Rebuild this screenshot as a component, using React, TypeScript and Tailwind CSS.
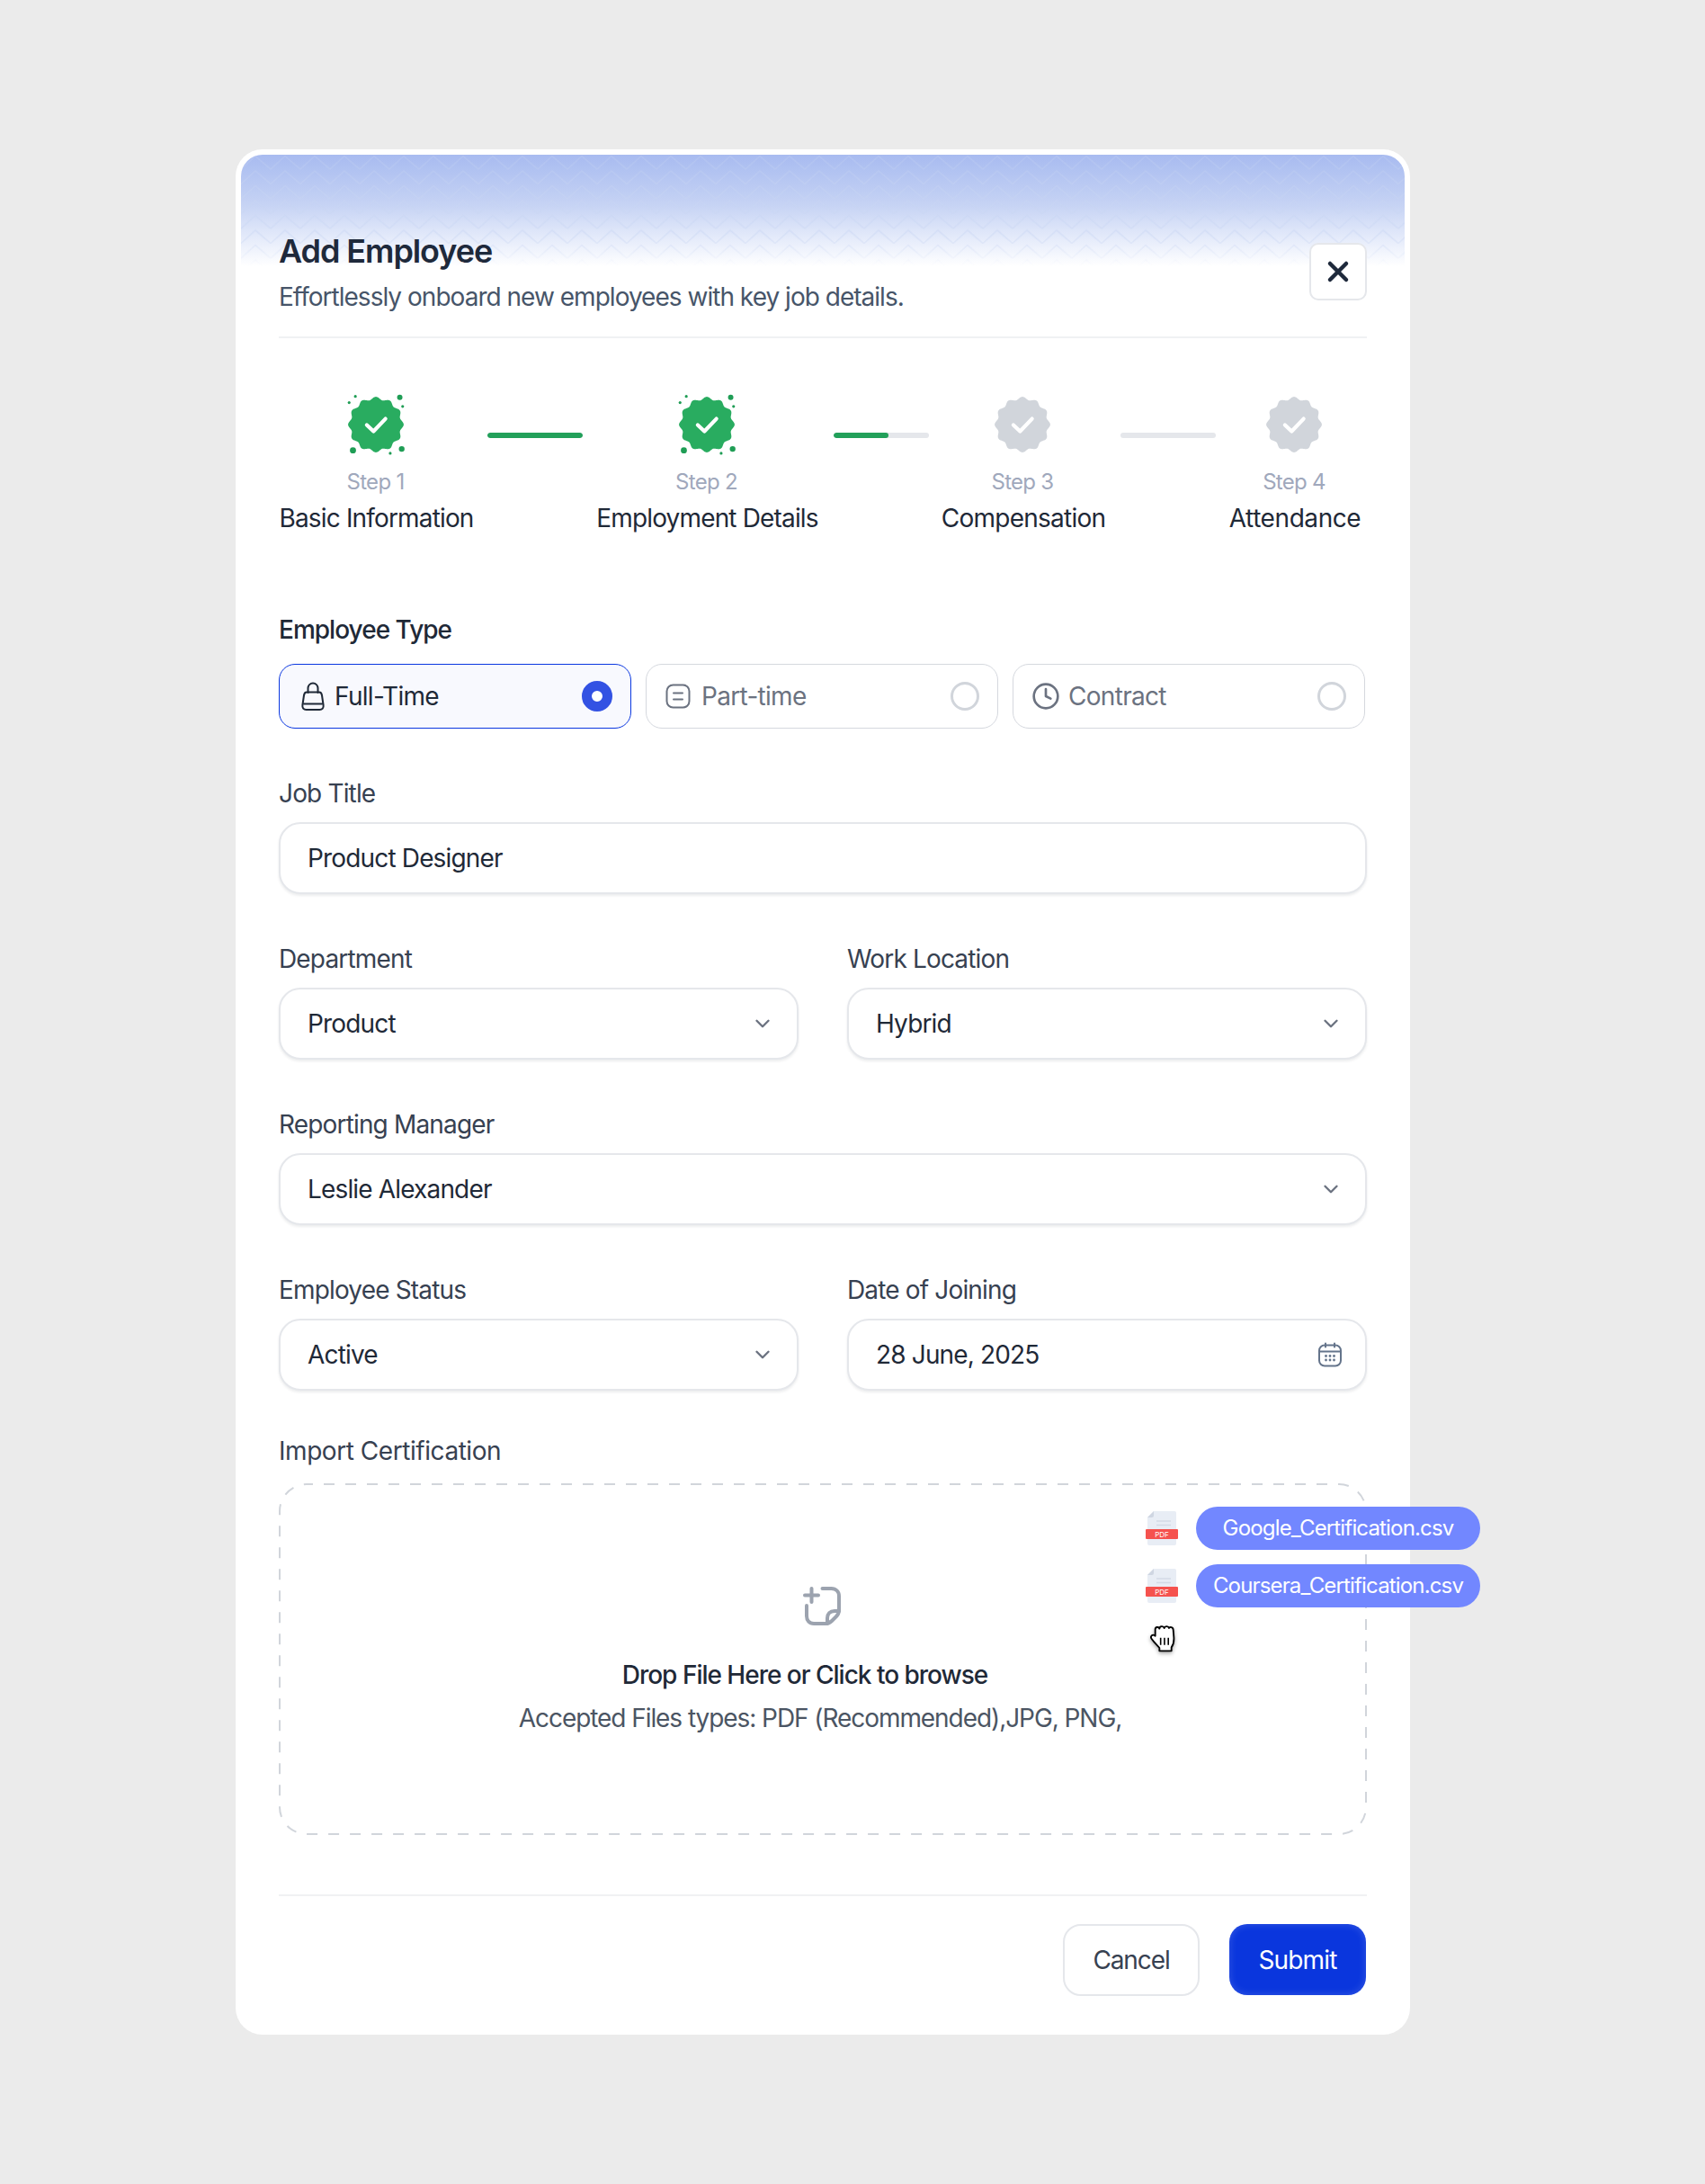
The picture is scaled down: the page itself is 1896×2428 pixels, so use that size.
import { ChevronDown, Clock, X } from "lucide-react";

const steps = [
	{ step: "Step 1", label: "Basic Information", done: true, w: "w-[217px]", track: "tracking-[-0.03em]" },
	{ step: "Step 2", label: "Employment Details", done: true, w: "w-[247px] mr-[2px]", track: "tracking-[-0.03em]" },
	{ step: "Step 3", label: "Compensation", done: false, w: "w-[180px] mr-[3px]", track: "tracking-[-0.027em]" },
	{ step: "Step 4", label: "Attendance", done: false, w: "w-[146px]", track: "tracking-[-0.015em]" },
];

// wavy seal outline, 12 lobes
const sealPath = (() => {
	const pts: string[] = [];
	for (let i = 0; i < 240; i++) {
		const a = (i / 240) * Math.PI * 2 + Math.PI / 2;
		const r = 27.6 + 1.5 * Math.cos(12 * (a - Math.PI / 2));
		pts.push(`${(32 + r * Math.cos(a)).toFixed(2)} ${(32 + r * Math.sin(a)).toFixed(2)}`);
	}
	return `M${pts.join("L")}Z`;
})();

function Badge({ done }: { done: boolean }) {
	return (
		<svg width="68" height="68" viewBox="0 0 64 64" className="block -mt-[4px] -translate-x-[1px]">
			<path d={sealPath} fill={done ? "#29ac60" : "#d1d5db"} />
			<path d="M22.500 32.500l7 6.500 12.500-13" fill="none" stroke="#fff" strokeWidth="4" strokeLinecap="round" strokeLinejoin="round" />
			{done && (
				<g fill="#1f9d55">
					<circle cx="57" cy="3.500" r="2.800" />
					<circle cx="60" cy="13" r="1.500" />
					<circle cx="4" cy="9" r="1.500" />
					<circle cx="10.500" cy="2.500" r="1.500" />
					<circle cx="8" cy="59" r="3.200" />
					<circle cx="59" cy="57.500" r="3" />
					<circle cx="47" cy="62" r="1.500" />
				</g>
			)}
		</svg>
	);
}

function Connector({ fill }: { fill: string }) {
	return (
		<div className="mt-[39px] h-[6px] w-[106px] shrink-0 overflow-hidden rounded-full bg-[#e5e7eb]">
			<div className={`h-full rounded-full bg-[#22a05a] ${fill}`} />
		</div>
	);
}

function Radio({ on }: { on: boolean }) {
	return on ? (
		<span className="h-[34px] w-[34px] rounded-full border-[11px] border-[#3352e3] bg-white" />
	) : (
		<span className="h-[32px] w-[32px] rounded-full border-[3px] border-[#d1d5db] bg-white" />
	);
}

function BagIcon() {
	return (
		<svg width="32" height="34" viewBox="0 0 32 34" fill="none" stroke="#1f2937" strokeWidth="2" strokeLinecap="round" strokeLinejoin="round">
			<path d="M9 12.500C7 12.500 6.300 14 6 16L4.400 27c-.4 3 1.200 5 4.100 5h15c2.900 0 4.500-2 4.100-5L26 16c-.3-2-1-3.500-3-3.500z" />
			<path d="M10.500 13V8a5.500 5.500 0 0 1 11 0v5" />
			<path d="M6 25.500h20" />
		</svg>
	);
}

function NoteIcon() {
	return (
		<svg width="32" height="32" viewBox="0 0 32 32" fill="none" stroke="#6b7280" strokeWidth="2" strokeLinecap="round">
			<rect x="3.500" y="3.500" width="25" height="25" rx="7" />
			<path d="M11 12.500h10M11 19.500h10" />
		</svg>
	);
}

function CalendarIcon() {
	return (
		<svg width="30" height="30" viewBox="0 0 30 30" fill="none" stroke="#64748b" strokeWidth="2" strokeLinecap="round" className="shrink-0">
			<rect x="3" y="4.500" width="24" height="23" rx="6" />
			<path d="M3.500 11.500h23M10 2.500v4M20 2.500v4" />
			<g fill="#64748b" stroke="none">
				<circle cx="10.500" cy="16.500" r="1.400" />
				<circle cx="15" cy="16.500" r="1.400" />
				<circle cx="19.500" cy="16.500" r="1.400" />
				<circle cx="10.500" cy="21" r="1.400" />
				<circle cx="15" cy="21" r="1.400" />
				<circle cx="19.500" cy="21" r="1.400" />
			</g>
		</svg>
	);
}

function UploadIcon() {
	return (
		<svg width="44" height="46" viewBox="0 0 44 46" fill="none" stroke="#9ca3af" strokeWidth="4" strokeLinecap="round" strokeLinejoin="round">
			<path d="M2 10.500h15M9.500 3v15" />
			<path d="M21.500 3h10c5 0 8.500 3.500 8.500 8.500V27c0 3-1 5-3 7l-5 5c-2 2-4 3-7 3H12c-5 0-8-3.500-8-8.500V22" />
			<path d="M40 28h-5c-5 0-8 3-8 8v6" />
		</svg>
	);
}

function PdfIcon() {
	return (
		<div className="relative h-[38px] w-[36px]">
			<svg width="32" height="38" viewBox="0 0 32 38" className="absolute left-[2px] top-0">
				<path d="M7 0h23a2 2 0 0 1 2 2v34a2 2 0 0 1-2 2H2a2 2 0 0 1-2-2V7z" fill="#e8edf5" />
				<path d="M7 0v5a2 2 0 0 1-2 2H0z" fill="#cfd6e2" />
				<path d="M10 11h16M10 15.500h16" stroke="#d3dae6" strokeWidth="1.500" />
			</svg>
			<span className="absolute left-0 top-[20px] flex h-[11px] w-[36px] items-center justify-center rounded-[1px] bg-[#f5524e] text-[8px] leading-none text-white">
				PDF
			</span>
		</div>
	);
}

function HandCursor() {
	return (
		<svg width="40" height="40" viewBox="0 0 30 30" className="drop-shadow-[0_2px_2px_rgba(0,0,0,0.35)]">
			<path
				d="M8 8.500c0-2 3-2.500 3.500-.5 0-2.500 3.500-2.500 4-.5.500-2 3.500-1.800 4 0 .5-1.300 3.500-1 3.500 1.500l.5 6c.3 4-.5 6.500-2 8.500v3H11.500v-2.500c-2-2.500-4-4-6.500-7.500-1.500-2 .5-4.500 3-2.500z"
				fill="#fff"
				stroke="#000"
				strokeWidth="1.400"
				strokeLinejoin="round"
			/>
			<path d="M12.500 15.500v6M15.700 15.500v6M18.900 15.500v6" stroke="#000" strokeWidth="1.200" />
		</svg>
	);
}

function ZigzagHeader() {
	return (
		<div className="absolute left-[6px] right-[6px] top-[6px] h-[124px] overflow-hidden rounded-t-[24px] bg-gradient-to-b from-[#a8bbf0] via-[#c6d3f4] via-45% to-white">
			<svg width="100%" height="124" className="block">
				<defs>
					<pattern id="zig" width="33" height="16.500" patternUnits="userSpaceOnUse">
						<path d="M-1 17L16 1.500L34 17" fill="none" stroke="#c9d6f3" strokeWidth="1.500" />
					</pattern>
					<linearGradient id="fade" x1="0" x2="0" y1="0" y2="1">
						<stop offset="0" stopColor="#fff" stopOpacity="0.25" />
						<stop offset="0.7" stopColor="#fff" stopOpacity="0.5" />
						<stop offset="1" stopColor="#fff" stopOpacity="0" />
					</linearGradient>
					<mask id="zigMask">
						<rect width="100%" height="124" fill="url(#fade)" />
					</mask>
				</defs>
				<rect width="100%" height="124" fill="url(#zig)" mask="url(#zigMask)" />
			</svg>
		</div>
	);
}

function Label({ children }: { children: string }) {
	return <div className="h-[36px] text-[28px] leading-[36px] tracking-[-0.03em] text-[#374151]">{children}</div>;
}

function Field({ label, value, icon }: { label: string; value: string; icon?: "select" | "date" }) {
	return (
		<div className="flex min-w-0 flex-1 flex-col">
			<Label>{label}</Label>
			<div className="mt-[14px] flex h-[80px] items-center justify-between rounded-[24px] border-2 border-[#e5e7eb] bg-white px-[30px] shadow-[0_2px_3px_rgba(16,24,40,0.08)]">
				<span className="text-[28px] tracking-[-0.03em] text-[#1f2937]">{value}</span>
				{icon === "select" && <ChevronDown size={26} strokeWidth={2.2} className="-mr-[5px] text-[#6b7280]" />}
				{icon === "date" && <span className="flex -mr-[6px]"><CalendarIcon /></span>}
			</div>
		</div>
	);
}

export default function App() {
	return (
		<div className="min-h-[2428px] bg-[#ebebeb] pl-[262px] pt-[166px] [font-family:Inter,sans-serif]">
			<div className="relative h-[2096px] w-[1306px] rounded-[30px] bg-white px-[48px]">
				<ZigzagHeader />

				<header className="relative flex items-center justify-between border-b-2 border-[#f0f1f3] pb-[24px] pt-[91px]">
					<div>
						<h1 className="text-[36px] font-semibold leading-[44px] tracking-[-0.03em] text-[#1e293b]">Add Employee</h1>
						<p className="mt-[9px] text-[28px] leading-[40px] tracking-[-0.035em] text-[#475569]">
							Effortlessly onboard new employees with key job details.
						</p>
					</div>
					<button className="-mt-[3px] flex h-[64px] w-[64px] items-center justify-center rounded-[10px] border-2 border-[#e5e7eb] bg-white">
						<X size={36} strokeWidth={3} className="text-[#1e293b]" />
					</button>
				</header>

				<div className="mt-[66px] flex items-start gap-[15px]">
					{steps.map((s, i) => (
						<div key={s.step} className="contents">
							<div className={`flex shrink-0 flex-col items-center ${s.w}`}>
								<Badge done={s.done} />
								<div className="mt-[14px] -translate-x-[1px] text-[24px] leading-[32px] tracking-[-0.03em] text-[#a0a8bc]">{s.step}</div>
								<div className={`mt-[6px] whitespace-nowrap text-[28px] leading-[36px] text-[#1f2937] ${s.track}`}>{s.label}</div>
							</div>
							{i === 0 && <Connector fill="w-full" />}
							{i === 1 && <Connector fill="w-[58%]" />}
							{i === 2 && <Connector fill="w-0" />}
						</div>
					))}
				</div>

				<div className="mt-[88px] h-[36px] text-[28px] font-medium leading-[36px] tracking-[-0.035em] text-[#1f2937]">Employee Type</div>
				<div className="mt-[20px] grid w-[1208px] grid-cols-3 gap-[16px]">
					<div className="flex h-[72px] items-center rounded-[18px] border-[1.5px] border-[#0a37e0] bg-[#f8f9fe] pl-[21px] pr-[20px]">
						<BagIcon />
						<span className="ml-[8px] flex-1 text-[28px] tracking-[-0.025em] text-[#1f2937]">Full-Time</span>
						<Radio on />
					</div>
					<div className="flex h-[72px] items-center rounded-[18px] border-[1.5px] border-[#d5d8de] bg-white pl-[19px] pr-[20px]">
						<NoteIcon />
						<span className="ml-[10px] flex-1 text-[28px] tracking-[-0.025em] text-[#6b7280]">Part-time</span>
						<Radio on={false} />
					</div>
					<div className="flex h-[72px] items-center rounded-[18px] border-[1.5px] border-[#d5d8de] bg-white pl-[20px] pr-[20px]">
						<Clock size={32} strokeWidth={2} className="text-[#6b7280]" />
						<span className="ml-[9px] flex-1 text-[28px] tracking-[-0.025em] text-[#6b7280]">Contract</span>
						<Radio on={false} />
					</div>
				</div>

				<div className="mt-[54px] flex flex-col gap-[54px]">
					<Field label="Job Title" value="Product Designer" />
					<div className="flex gap-[54px]">
						<Field label="Department" value="Product" icon="select" />
						<Field label="Work Location" value="Hybrid" icon="select" />
					</div>
					<Field label="Reporting Manager" value="Leslie Alexander" icon="select" />
					<div className="flex gap-[54px]">
						<Field label="Employee Status" value="Active" icon="select" />
						<Field label="Date of Joining" value="28 June, 2025" icon="date" />
					</div>
				</div>

				<div className="mt-[49px]">
					<div className="h-[36px] text-[28px] leading-[36px] tracking-[-0.016em] text-[#374151]">Import Certification</div>
					<div className="relative mt-[18px] flex h-[391px] flex-col items-center pt-[114px]">
						<svg width="1210" height="391" className="absolute left-0 top-0">
							<rect x="1" y="1" width="1208" height="389" rx="30" fill="none" stroke="#d1d5db" strokeWidth="2" strokeDasharray="12 12" strokeDashoffset="5" />
						</svg>
						<UploadIcon />
						<div className="mr-[40px] mt-[35px] text-[28px] font-medium leading-[36px] tracking-[-0.036em] text-[#1f2937]">Drop File Here or Click to browse</div>
						<div className="mr-[6px] mt-[12px] text-[28px] leading-[36px] tracking-[-0.038em] text-[#4b5563]">Accepted Files types: PDF (Recommended),JPG, PNG,</div>

						<div className="absolute left-[964px] top-[26px] flex flex-col gap-[16px]">
							{["Google_Certification.csv", "Coursera_Certification.csv"].map((name) => (
								<div key={name} className="flex items-center gap-[20px]">
									<PdfIcon />
									<span className="flex h-[48px] w-[316px] items-center justify-center rounded-full bg-[#7287ff] text-[24px] tracking-[-0.035em] text-white">{name}</span>
								</div>
							))}
						</div>
						<div className="absolute left-[964px] top-[151px]">
							<HandCursor />
						</div>
					</div>
				</div>

				<footer className="mt-[66px] flex justify-end gap-[33px] border-t-2 border-[#f0f1f3] pr-[1px] pt-[31px]">
					<button className="h-[80px] w-[152px] rounded-[20px] border-2 border-[#e5e7eb] bg-white text-[28px] tracking-[-0.04em] text-[#374151]">Cancel</button>
					<button className="h-[79px] w-[152px] rounded-[20px] bg-[#0a36dd] text-[28px] tracking-[-0.03em] text-white shadow-[inset_0_0_10px_rgba(255,255,255,0.18)]">Submit</button>
				</footer>
			</div>
		</div>
	);
}
